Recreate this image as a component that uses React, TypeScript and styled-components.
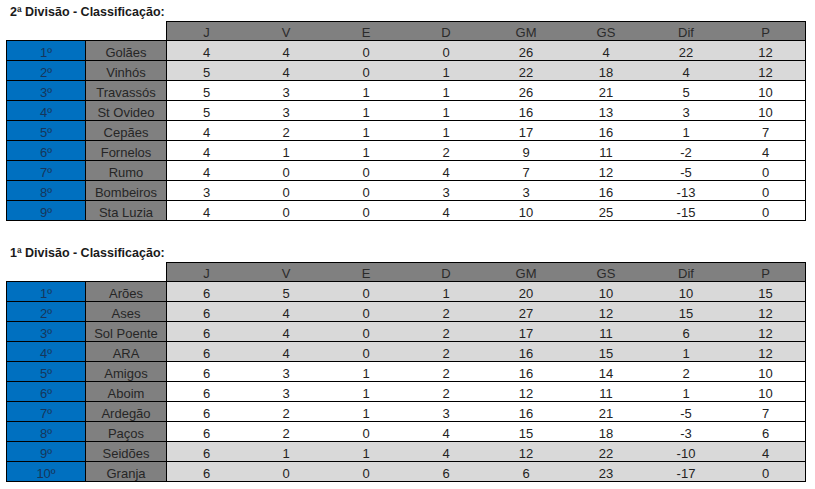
import React from 'react';
import styled, { createGlobalStyle } from 'styled-components';

const GlobalStyle = createGlobalStyle`
  html, body {
    margin: 0;
    padding: 0;
    background: #ffffff;
  }
  body {
    font-family: 'Liberation Sans', Arial, sans-serif;
    color: #222222;
  }
`;

const Page = styled.div`
  width: 815px;
  height: 489px;
  overflow: hidden;
  background: #ffffff;
`;

const Section = styled.section`
  display: flex;
  flex-direction: column;
  & + & {
    margin-top: 20px;
  }
`;

const Title = styled.h2`
  margin: 0;
  height: 21px;
  box-sizing: border-box;
  padding: 4px 0 0 10px;
  line-height: 17px;
  font-size: 12.5px;
  font-weight: bold;
  color: #1a1a1a;
`;

const Grid = styled.div`
  display: grid;
  grid-template-columns: repeat(10, 80px);
  margin-left: 6px;
`;

const Cell = styled.div`
  height: 20px;
  box-sizing: border-box;
  padding-top: 3px;
  line-height: 17px;
  font-size: 13px;
  text-align: center;
  white-space: nowrap;
  border-bottom: 1px solid #000;
`;

const Blank = styled(Cell)``;

const HeadCell = styled(Cell)<{ $first?: boolean; $last?: boolean }>`
  background: #808080;
  color: #2b2b2b;
  border-top: 1px solid #000;
  padding-top: 2px;
  border-left: ${(p) => (p.$first ? '1px solid #000' : 'none')};
  border-right: ${(p) => (p.$last ? '1px solid #000' : 'none')};
`;

const RankCell = styled(Cell)`
  background: #0070c0;
  color: #16365c;
  border-left: 1px solid #000;
  border-right: 1px solid #000;
`;

const TeamCell = styled(Cell)`
  background: #808080;
  color: #262626;
`;

const DataCell = styled(Cell)<{ $shade: boolean; $first?: boolean; $last?: boolean }>`
  background: ${(p) => (p.$shade ? '#d9d9d9' : '#ffffff')};
  color: #222222;
  border-left: ${(p) => (p.$first ? '1px solid #000' : 'none')};
  border-right: ${(p) => (p.$last ? '1px solid #000' : 'none')};
`;

type Row = [string, number, number, number, number, number, number, number, number];

const columns = ['J', 'V', 'E', 'D', 'GM', 'GS', 'Dif', 'P'];

const division2: Row[] = [
  ['Golães', 4, 4, 0, 0, 26, 4, 22, 12],
  ['Vinhós', 5, 4, 0, 1, 22, 18, 4, 12],
  ['Travassós', 5, 3, 1, 1, 26, 21, 5, 10],
  ['St Ovideo', 5, 3, 1, 1, 16, 13, 3, 10],
  ['Cepães', 4, 2, 1, 1, 17, 16, 1, 7],
  ['Fornelos', 4, 1, 1, 2, 9, 11, -2, 4],
  ['Rumo', 4, 0, 0, 4, 7, 12, -5, 0],
  ['Bombeiros', 3, 0, 0, 3, 3, 16, -13, 0],
  ['Sta Luzia', 4, 0, 0, 4, 10, 25, -15, 0],
];

const division1: Row[] = [
  ['Arões', 6, 5, 0, 1, 20, 10, 10, 15],
  ['Ases', 6, 4, 0, 2, 27, 12, 15, 12],
  ['Sol Poente', 6, 4, 0, 2, 17, 11, 6, 12],
  ['ARA', 6, 4, 0, 2, 16, 15, 1, 12],
  ['Amigos', 6, 3, 1, 2, 16, 14, 2, 10],
  ['Aboim', 6, 3, 1, 2, 12, 11, 1, 10],
  ['Ardegão', 6, 2, 1, 3, 16, 21, -5, 7],
  ['Paços', 6, 2, 0, 4, 15, 18, -3, 6],
  ['Seidões', 6, 1, 1, 4, 12, 22, -10, 4],
  ['Granja', 6, 0, 0, 6, 6, 23, -17, 0],
];

interface StandingsProps {
  title: string;
  rows: Row[];
  shaded: (index: number) => boolean;
}

const Standings: React.FC<StandingsProps> = ({ title, rows, shaded }) => (
  <Section>
    <Title>{title}</Title>
    <Grid>
      <Blank />
      <Blank />
      {columns.map((c, i) => (
        <HeadCell key={c} $first={i === 0} $last={i === columns.length - 1}>
          {c}
        </HeadCell>
      ))}
      {rows.map(([team, ...stats], r) => (
        <React.Fragment key={team}>
          <RankCell>{r + 1}º</RankCell>
          <TeamCell>{team}</TeamCell>
          {stats.map((v, i) => (
            <DataCell
              key={i}
              $shade={shaded(r)}
              $first={i === 0}
              $last={i === stats.length - 1}
            >
              {v}
            </DataCell>
          ))}
        </React.Fragment>
      ))}
    </Grid>
  </Section>
);

const App: React.FC = () => (
  <Page>
    <GlobalStyle />
    <Standings
      title="2ª Divisão - Classificação:"
      rows={division2}
      shaded={(i) => i < 2}
    />
    <Standings
      title="1ª Divisão - Classificação:"
      rows={division1}
      shaded={(i) => i < 4 || i >= 8}
    />
  </Page>
);

export default App;
